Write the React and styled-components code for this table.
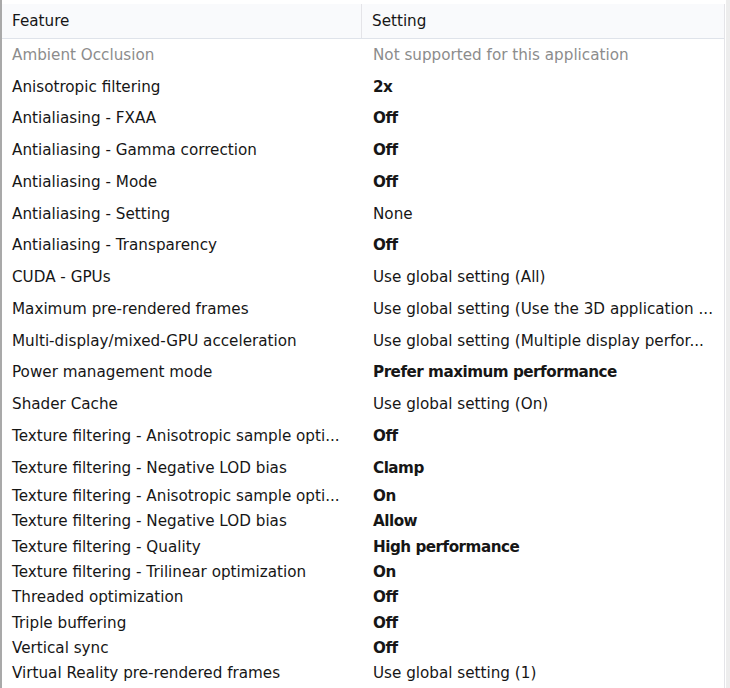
import React from "react";
import styled, { createGlobalStyle } from "styled-components";

const rowsTop = [
  { feature: "Ambient Occlusion", setting: "Not supported for this application", muted: true },
  { feature: "Anisotropic filtering", setting: "2x", bold: true },
  { feature: "Antialiasing - FXAA", setting: "Off", bold: true },
  { feature: "Antialiasing - Gamma correction", setting: "Off", bold: true },
  { feature: "Antialiasing - Mode", setting: "Off", bold: true },
  { feature: "Antialiasing - Setting", setting: "None" },
  { feature: "Antialiasing - Transparency", setting: "Off", bold: true },
  { feature: "CUDA - GPUs", setting: "Use global setting (All)" },
  { feature: "Maximum pre-rendered frames", setting: "Use global setting (Use the 3D application ..." },
  { feature: "Multi-display/mixed-GPU acceleration", setting: "Use global setting (Multiple display perfor..." },
  { feature: "Power management mode", setting: "Prefer maximum performance", bold: true },
  { feature: "Shader Cache", setting: "Use global setting (On)" },
  { feature: "Texture filtering - Anisotropic sample opti...", setting: "Off", bold: true },
  { feature: "Texture filtering - Negative LOD bias", setting: "Clamp", bold: true },
];

const rowsBottom = [
  { feature: "Texture filtering - Anisotropic sample opti...", setting: "On", bold: true },
  { feature: "Texture filtering - Negative LOD bias", setting: "Allow", bold: true },
  { feature: "Texture filtering - Quality", setting: "High performance", bold: true },
  { feature: "Texture filtering - Trilinear optimization", setting: "On", bold: true },
  { feature: "Threaded optimization", setting: "Off", bold: true },
  { feature: "Triple buffering", setting: "Off", bold: true },
  { feature: "Vertical sync", setting: "Off", bold: true },
  { feature: "Virtual Reality pre-rendered frames", setting: "Use global setting (1)" },
];

const GlobalStyle = createGlobalStyle`
  html, body {
    margin: 0;
    padding: 0;
    background: #ffffff;
  }
`;

const Panel = styled.div`
  width: 730px;
  height: 688px;
  box-sizing: border-box;
  background: #ffffff;
  border-left: 2px solid #a9a9a9;
  border-right: 4px solid #ededed;
  padding-top: 4px;
  overflow: hidden;
  font-family: "DejaVu Sans", Verdana, sans-serif;
  font-size: 15.2px;
  color: #161616;
`;

const Table = styled.div`
  width: 722px;
  border-right: 1px solid #e4e4e8;
  height: 100%;
`;

const Header = styled.div`
  display: grid;
  grid-template-columns: 360px 1fr;
  height: 35px;
  box-sizing: border-box;
  background: #f9fafc;
  border-bottom: 1px solid #dfe3ea;
`;

const HeadCell = styled.div`
  display: flex;
  align-items: center;
  padding-left: ${(p) => p.$pad}px;
  border-right: ${(p) => (p.$divider ? "1px solid #e4e4e8" : "none")};
`;

const Row = styled.div`
  display: grid;
  grid-template-columns: 361px 1fr;
  height: ${(p) => p.$h}px;
  align-items: center;
  color: ${(p) => (p.$muted ? "#8c8c8c" : "#161616")};
`;

const Cell = styled.div`
  padding-left: ${(p) => p.$pad}px;
  white-space: nowrap;
  overflow: hidden;
  font-weight: ${(p) => (p.$bold ? 700 : 400)};
  letter-spacing: ${(p) => (p.$bold ? "-0.5px" : "0")};
`;

const Group = ({ rows, h }) =>
  rows.map((r, i) => (
    <Row key={i} $h={h} $muted={r.muted}>
      <Cell $pad={10}>{r.feature}</Cell>
      <Cell $pad={10} $bold={r.bold}>
        {r.setting}
      </Cell>
    </Row>
  ));

export default function App() {
  return (
    <>
      <GlobalStyle />
      <Panel>
        <Table>
          <Header>
            <HeadCell $pad={10} $divider>
              Feature
            </HeadCell>
            <HeadCell $pad={10}>Setting</HeadCell>
          </Header>
          <Group rows={rowsTop} h={31.75} />
          <Group rows={rowsBottom} h={25.3} />
        </Table>
      </Panel>
    </>
  );
}
